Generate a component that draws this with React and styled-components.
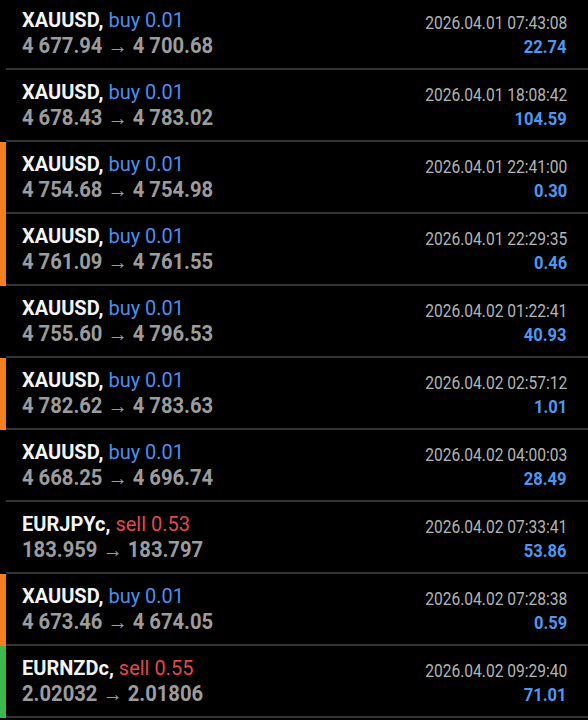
import styled, { createGlobalStyle } from "styled-components";

const Global = createGlobalStyle`
  html, body {
    margin: 0;
    padding: 0;
    background: #000;
  }
  body {
    font-family: Roboto, "Liberation Sans", sans-serif;
    overflow: hidden;
  }
`;

const List = styled.div`
  display: flex;
  flex-direction: column;
  margin-top: -2px;
  width: 588px;
`;

const Row = styled.div`
  display: flex;
  height: 72px;
`;

const Bar = styled.div`
  width: 6px;
  flex: none;
  background: ${(p) => p.color || "transparent"};
`;

const Content = styled.div`
  flex: 1;
  display: flex;
  justify-content: space-between;
  padding: 0 21px 0 16px;
  border-bottom: 2px solid #333333;
`;

const Left = styled.div`
  display: flex;
  flex-direction: column;
  padding-top: 10px;
`;

const Title = styled.div`
  font-size: 20px;
  line-height: 24px;
  color: #f4f4f4;
  white-space: nowrap;
`;

const Symbol = styled.span`
  font-weight: 700;
`;

const Side = styled.span`
  color: ${(p) => (p.sell ? "#e2474f" : "#4a8ff0")};
`;

const Prices = styled.div`
  margin-top: 1px;
  font-size: 21.5px;
  line-height: 26px;
  font-weight: 700;
  color: #9c9c9c;
  white-space: nowrap;
  transform: scaleX(0.94);
  transform-origin: left center;
`;

const Arrow = styled.span`
  font-weight: 400;
`;

const Right = styled.div`
  display: flex;
  flex-direction: column;
  align-items: flex-end;
  padding-top: 14px;
`;

const Time = styled.span`
  display: inline-block;
  font-size: 18px;
  line-height: 22px;
  color: #b4b4b4;
  white-space: nowrap;
  transform: scaleX(0.865);
  transform-origin: right center;
`;

const Profit = styled.span`
  display: inline-block;
  margin-top: 2px;
  font-size: 18px;
  line-height: 22px;
  font-weight: 700;
  color: #4d98f2;
  transform: scaleX(0.92);
  transform-origin: right center;
`;

const ORANGE = "#f2801f";
const GREEN = "#3cb84e";

const deals = [
  { sym: "XAUUSD", side: "buy", vol: "0.01", open: "4 677.94", close: "4 700.68", time: "2026.04.01 07:43:08", profit: "22.74" },
  { sym: "XAUUSD", side: "buy", vol: "0.01", open: "4 678.43", close: "4 783.02", time: "2026.04.01 18:08:42", profit: "104.59" },
  { sym: "XAUUSD", side: "buy", vol: "0.01", open: "4 754.68", close: "4 754.98", time: "2026.04.01 22:41:00", profit: "0.30", bar: ORANGE },
  { sym: "XAUUSD", side: "buy", vol: "0.01", open: "4 761.09", close: "4 761.55", time: "2026.04.01 22:29:35", profit: "0.46", bar: ORANGE },
  { sym: "XAUUSD", side: "buy", vol: "0.01", open: "4 755.60", close: "4 796.53", time: "2026.04.02 01:22:41", profit: "40.93" },
  { sym: "XAUUSD", side: "buy", vol: "0.01", open: "4 782.62", close: "4 783.63", time: "2026.04.02 02:57:12", profit: "1.01", bar: ORANGE },
  { sym: "XAUUSD", side: "buy", vol: "0.01", open: "4 668.25", close: "4 696.74", time: "2026.04.02 04:00:03", profit: "28.49" },
  { sym: "EURJPYc", side: "sell", vol: "0.53", open: "183.959", close: "183.797", time: "2026.04.02 07:33:41", profit: "53.86" },
  { sym: "XAUUSD", side: "buy", vol: "0.01", open: "4 673.46", close: "4 674.05", time: "2026.04.02 07:28:38", profit: "0.59", bar: ORANGE },
  { sym: "EURNZDc", side: "sell", vol: "0.55", open: "2.02032", close: "2.01806", time: "2026.04.02 09:29:40", profit: "71.01", bar: GREEN },
];

export default function App() {
  return (
    <>
      <Global />
      <List>
        {deals.map((d, i) => (
          <Row key={i}>
            <Bar color={d.bar} />
            <Content>
              <Left>
                <Title>
                  <Symbol>{d.sym},</Symbol>{" "}
                  <Side sell={d.side === "sell" ? 1 : 0}>
                    {d.side} {d.vol}
                  </Side>
                </Title>
                <Prices>
                  {d.open} <Arrow>→</Arrow> {d.close}
                </Prices>
              </Left>
              <Right>
                <Time>{d.time}</Time>
                <Profit>{d.profit}</Profit>
              </Right>
            </Content>
          </Row>
        ))}
      </List>
    </>
  );
}
